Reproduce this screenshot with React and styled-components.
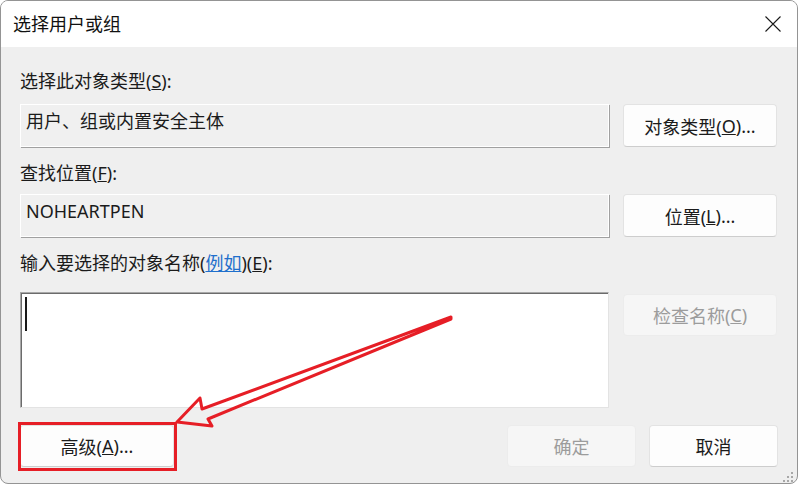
import React from "react";
import styled, { createGlobalStyle } from "styled-components";

const GlobalStyle = createGlobalStyle`
  html, body {
    margin: 0;
    padding: 0;
    background: #ffffff;
  }
  body {
    font-family: "Noto Sans", "Noto Sans CJK SC", sans-serif;
    color: #1b1b1b;
  }
`;

const Stage = styled.div`
  position: relative;
  width: 798px;
  height: 486px;
`;

const Dialog = styled.div`
  width: 798px;
  height: 484px;
  box-sizing: border-box;
  border: 1px solid #949494;
  border-radius: 8px;
  background: #efefef;
  overflow: hidden;
  display: flex;
  flex-direction: column;
  position: relative;
`;

const TitleBar = styled.div`
  height: 46px;
  background: #ffffff;
  display: flex;
  align-items: center;
  justify-content: space-between;
  padding-left: 12px;
`;

const Title = styled.div`
  font-size: 18px;
  line-height: 24px;
  color: #111;
`;

const CloseButton = styled.div`
  width: 48px;
  height: 46px;
  display: flex;
  align-items: center;
  justify-content: center;
`;

const Body = styled.div`
  flex: 1;
  padding: 22px 19px 0 19px;
  display: flex;
  flex-direction: column;
`;

const Label = styled.div`
  height: 24px;
  line-height: 24px;
  font-size: 18px;
  margin-top: ${(p) => p.$mt || 0}px;
  white-space: nowrap;
`;

const Link = styled.span`
  color: #1f6fcc;
  text-decoration: underline;
`;

const Row = styled.div`
  display: grid;
  grid-template-columns: 590px 154px;
  column-gap: 13px;
  align-items: start;
  margin-top: ${(p) => p.$mt || 0}px;
`;

const ReadField = styled.div`
  width: 589px;
  height: 43px;
  box-sizing: border-box;
  border: 1px solid #ffffff;
  box-shadow: 1px 1px 0 #a0a0a0;
  background: #f0f0f0;
  padding: 4px 0 0 5px;
  font-size: 18px;
  line-height: 24px;
  white-space: nowrap;
`;

const NameInput = styled.div`
  width: 589px;
  height: 116px;
  box-sizing: border-box;
  border: 1px solid;
  border-color: #a8a8a8 #e3e3e3 #e3e3e3 #a8a8a8;
  box-shadow: inset 1px 1px 0 #6b6b6b;
  background: #ffffff;
  padding: 4px 0 0 4px;
`;

const Caret = styled.span`
  display: block;
  width: 2px;
  height: 34px;
  background: #1a1a1a;
`;

const Button = styled.div`
  width: ${(p) => p.$w || 154}px;
  height: ${(p) => p.$h || 42}px;
  box-sizing: border-box;
  margin-top: ${(p) => p.$mt || 0}px;
  border: 1px solid ${(p) => (p.$disabled ? "#ececec" : "#e3e3e3")};
  border-bottom-color: ${(p) => (p.$disabled ? "#ececec" : "#cdcdcd")};
  border-radius: 4px;
  background: ${(p) => (p.$disabled ? "#f6f6f6" : "#fdfdfd")};
  color: ${(p) => (p.$disabled ? "#9c9c9c" : "#1b1b1b")};
  font-size: 18px;
  display: flex;
  align-items: center;
  justify-content: center;
  white-space: nowrap;
`;

const Footer = styled.div`
  margin-top: 17px;
  display: flex;
  justify-content: space-between;
`;

const FooterGroup = styled.div`
  display: flex;
  gap: 13px;
`;

const Grip = styled.svg`
  position: absolute;
  right: 3px;
  bottom: 1px;
`;

const Overlay = styled.svg`
  position: absolute;
  top: 0;
  left: 0;
  pointer-events: none;
`;

const App = () => {
  return (
    <>
      <GlobalStyle />
      <Stage>
        <Dialog>
          <TitleBar>
            <Title>选择用户或组</Title>
            <CloseButton>
              <svg width="16" height="16" viewBox="0 0 16 16">
                <path d="M0.5 0.5L15.5 15.5M15.5 0.5L0.5 15.5" stroke="#1a1a1a" strokeWidth="1.1" />
              </svg>
            </CloseButton>
          </TitleBar>

          <Body>
            <Label>
              选择此对象类型(<u>S</u>):
            </Label>
            <Row $mt={11}>
              <ReadField>用户、组或内置安全主体</ReadField>
              <Button $h={43}>
                对象类型(<u>O</u>)...
              </Button>
            </Row>

            <Label $mt={14}>
              查找位置(<u>F</u>):
            </Label>
            <Row $mt={9}>
              <ReadField>NOHEARTPEN</ReadField>
              <Button $h={43}>
                位置(<u>L</u>)...
              </Button>
            </Row>

            <Label $mt={14}>
              输入要选择的对象名称(<Link>例如</Link>)(<u>E</u>):
            </Label>
            <Row $mt={17}>
              <NameInput>
                <Caret />
              </NameInput>
              <Button $disabled $mt={2}>
                检查名称(<u>C</u>)
              </Button>
            </Row>

            <Footer>
              <Button>
                高级(<u>A</u>)...
              </Button>
              <FooterGroup>
                <Button $w={129} $disabled>
                  确定
                </Button>
                <Button $w={129}>取消</Button>
              </FooterGroup>
            </Footer>
          </Body>

          <Grip width="12" height="10" viewBox="0 0 12 10">
            <rect x="9" y="0" width="2" height="2" fill="#a8a8a8" />
            <rect x="5" y="4" width="2" height="2" fill="#a8a8a8" />
            <rect x="9" y="4" width="2" height="2" fill="#a8a8a8" />
            <rect x="1" y="8" width="2" height="2" fill="#a8a8a8" />
            <rect x="5" y="8" width="2" height="2" fill="#a8a8a8" />
            <rect x="9" y="8" width="2" height="2" fill="#a8a8a8" />
          </Grip>
        </Dialog>

        <Overlay width="798" height="486" viewBox="0 0 798 486">
          <rect x="19.5" y="423.5" width="156" height="46" fill="none" stroke="#e61e26" strokeWidth="3" />
          <polygon
            points="451,317 202,409 200,398 177,422 212,426 208,419 451,319"
            fill="none"
            stroke="#e61e26"
            strokeWidth="3"
            strokeLinejoin="round"
          />
        </Overlay>
      </Stage>
    </>
  );
};

export default App;
